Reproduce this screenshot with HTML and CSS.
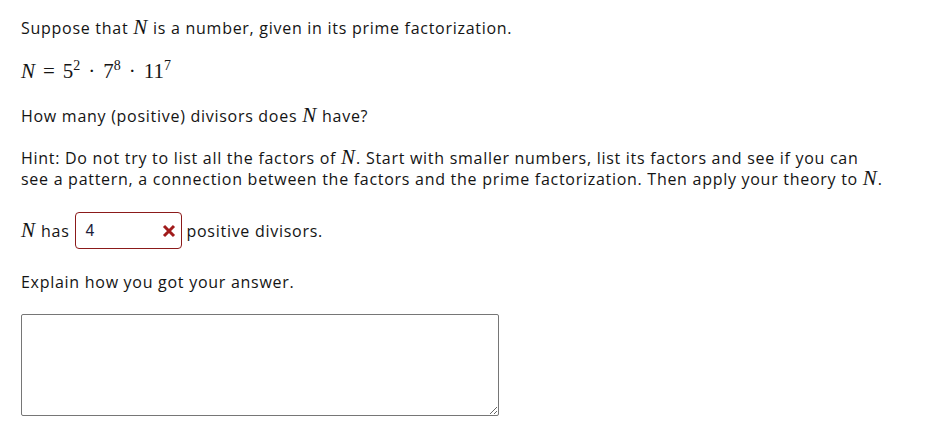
FILE: index.html
```html
<!DOCTYPE html>
<html>
<head>
<meta charset="utf-8">
<link rel="stylesheet" href="styles.css">
</head>
<body>
<div class="problem">
  <p class="line l1">Suppose that <span class="mi">N</span> is a number, given in its prime factorization.</p>
  <p class="line math l2"><span class="mi">N</span><span class="mo">=</span>5<sup>2</sup><span class="dot">·</span>7<sup>8</sup><span class="dot">·</span>11<sup>7</sup></p>
  <p class="line l3">How many (positive) divisors does <span class="mi">N</span> have?</p>
  <p class="line l4">Hint: Do not try to list all the factors of <span class="mi">N</span>. Start with smaller numbers, list its factors and see if you can<br>see a pattern, a connection between the factors and the prime factorization. Then apply your theory to <span class="mi">N</span>.</p>
  <div class="answer-row">
    <span class="mi">N</span><span class="has">has</span>
    <span class="answer-box"><span class="val">4</span><svg class="x" width="14" height="14" viewBox="0 0 14 14"><path d="M2 2 L12 12 M12 2 L2 12" stroke="#a11b1b" stroke-width="3" stroke-linecap="butt"/></svg></span>
    <span>positive divisors.</span>
  </div>
  <p class="line l5">Explain how you got your answer.</p>
  <textarea class="explain"></textarea>
</div>
</body>
</html>
```
FILE: styles.css
```css
html, body { margin: 0; padding: 0; background: #fff; }
body {
  font-family: "Open Sans", "Lato", sans-serif;
  font-size: 16px;
  letter-spacing: 0.72px;
  color: #141414;
}
.problem {
  padding: 18px 21px 0 21px;
  display: flex;
  flex-direction: column;
  align-items: flex-start;
}
.line { margin: 0; line-height: 21px; white-space: nowrap; }
.l2 { margin-top: 22px; }
.l3 { margin-top: 24px; }
.l4 { margin-top: 21px; }
.l5 { margin-top: 23px; }
.mi {
  font-family: "Liberation Serif", "DejaVu Serif", serif;
  font-style: italic;
  font-size: 21px;
  letter-spacing: 0;
  line-height: 0;
  padding-right: 1px;
}
.math {
  font-family: "Liberation Serif", "DejaVu Serif", serif;
  font-size: 21px;
  letter-spacing: 0;
}
.math sup { font-size: 14px; vertical-align: 8px; line-height: 0; }
.math .mo { margin: 0 8px 0 7px; }
.math .dot { margin: 0 8px; }
.answer-row {
  margin-top: 22px;
  display: flex;
  align-items: center;
  height: 37px;
}
.answer-row .mi { line-height: 1; }
.has { margin-left: 5px; margin-right: 5px; }
.answer-box {
  box-sizing: border-box;
  width: 107px;
  height: 37px;
  border: 1px solid #8b1a1a;
  border-radius: 4px;
  display: flex;
  align-items: center;
  justify-content: space-between;
  padding: 0 5px 0 10px;
  margin-right: 5px;
}
.val { color: #1c1c3a; font-family: "Liberation Sans", sans-serif; font-size: 16px; letter-spacing: 0; }
.x { display: block; }
.explain {
  margin-top: 21px;
  box-sizing: border-box;
  width: 478px;
  height: 102px;
  border: 1px solid #767676;
  border-radius: 2px;
  resize: both;
}
```
